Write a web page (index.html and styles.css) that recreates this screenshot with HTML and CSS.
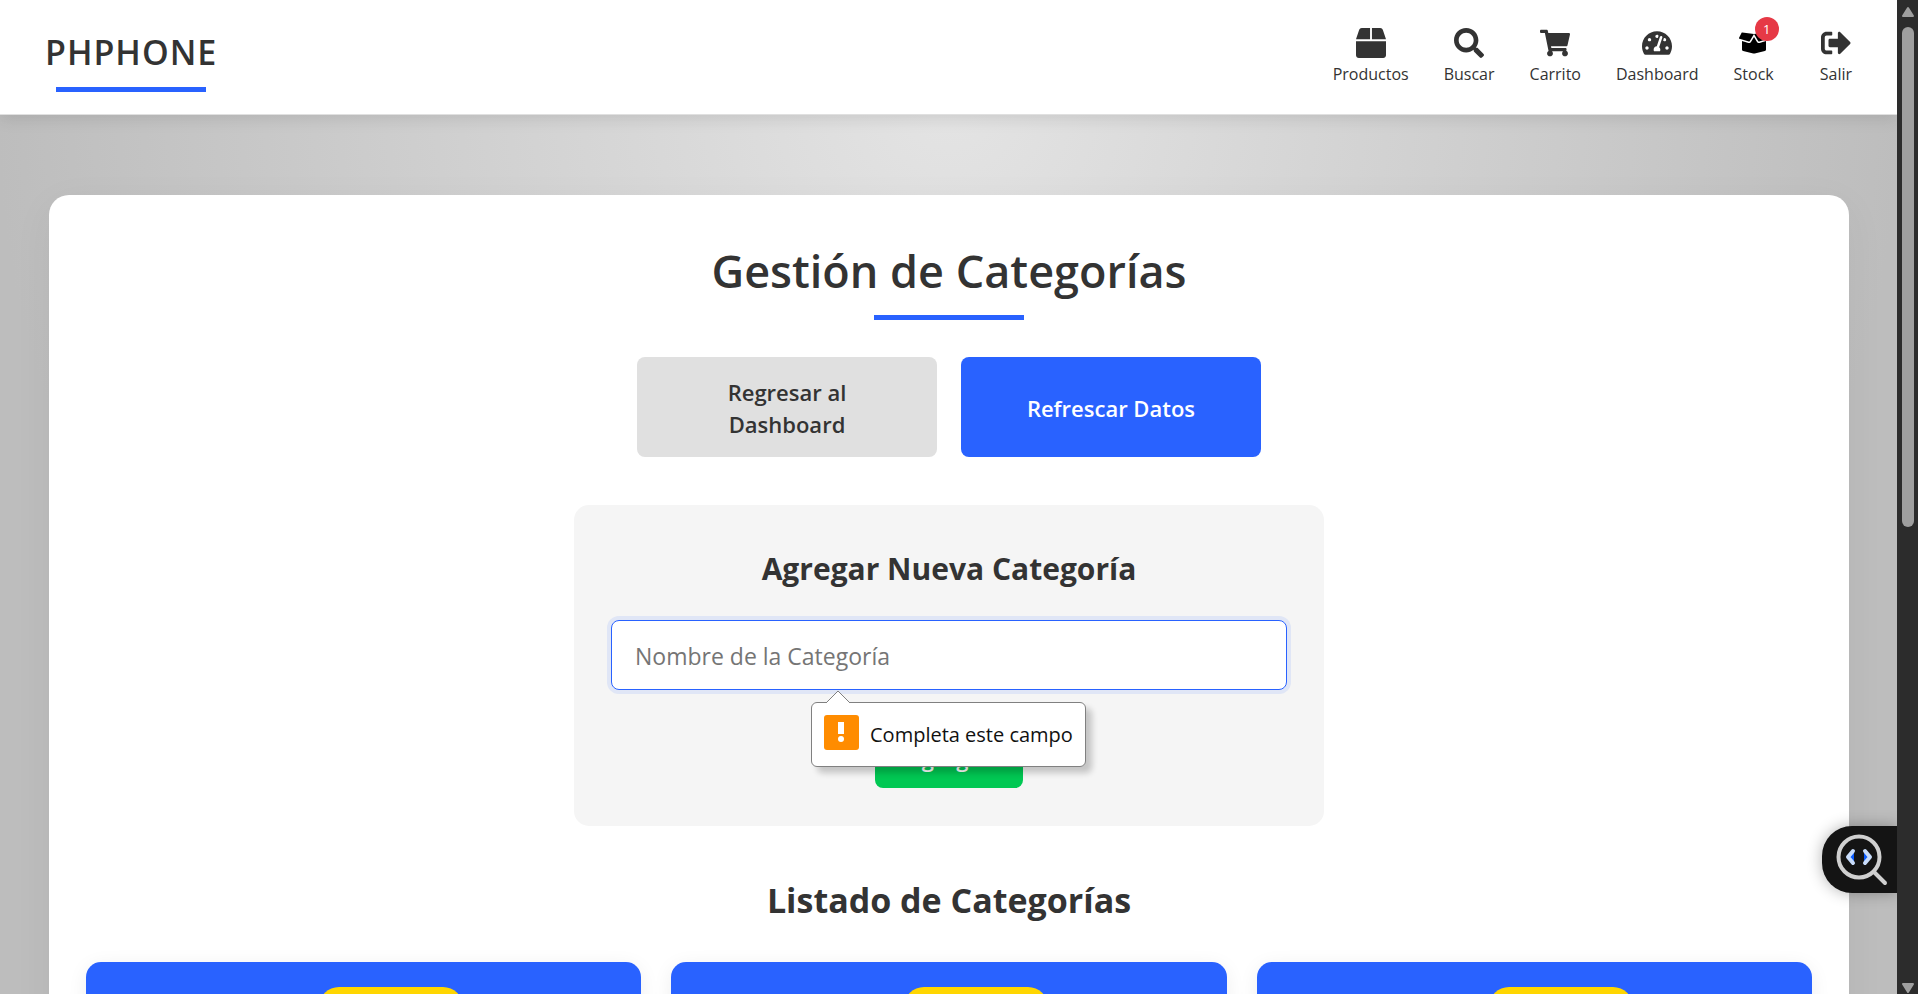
FILE: index.html
```html
<!DOCTYPE html>
<html lang="es">
<head>
<meta charset="utf-8">
<meta name="viewport" content="width=device-width, initial-scale=1">
<title>Gestión de Categorías</title>
<link rel="stylesheet" href="styles.css">
</head>
<body>
<div class="page">
  <header class="header">
    <a class="logo" href="#">PHPHONE</a>
    <nav class="nav">
      <a class="nav-item" href="#">
        <svg class="icon icon-square" viewBox="0 0 512 512"><path d="M509.500 184.600L458.900 32.800C452.400 13.200 434.100 0 413.400 0H272v192h238.700c-.4-2.500-.4-5-1.200-7.400zM240 0H98.600c-20.700 0-39 13.200-45.500 32.800L2.500 184.600c-.8 2.400-.8 4.900-1.200 7.400H240V0zM0 224v240c0 26.500 21.500 48 48 48h416c26.500 0 48-21.500 48-48V224H0z"/></svg>
        <span>Productos</span>
      </a>
      <a class="nav-item" href="#">
        <svg class="icon icon-square" viewBox="0 0 512 512"><path d="M505 442.700L405.300 343c-4.500-4.500-10.600-7-17-7H372c27.600-35.300 44-79.700 44-128C416 93.100 322.900 0 208 0S0 93.100 0 208s93.100 208 208 208c48.300 0 92.700-16.400 128-44v16.300c0 6.400 2.500 12.500 7 17l99.700 99.700c9.400 9.400 24.600 9.400 33.900 0l28.300-28.300c9.400-9.400 9.400-24.600.1-34zM208 336c-70.700 0-128-57.200-128-128 0-70.700 57.200-128 128-128 70.700 0 128 57.200 128 128 0 70.700-57.200 128-128 128z"/></svg>
        <span>Buscar</span>
      </a>
      <a class="nav-item" href="#">
        <svg class="icon" viewBox="0 0 576 512"><path d="M528.120 301.319l47.273-208C578.806 78.301 567.391 64 551.990 64H159.208l-9.166-44.810C147.758 8.021 137.930 0 126.529 0H24C10.745 0 0 10.745 0 24v16c0 13.255 10.745 24 24 24h69.883l70.248 343.435C147.325 417.100 136 435.222 136 456c0 30.928 25.072 56 56 56s56-25.072 56-56c0-15.674-6.447-29.835-16.824-40h209.647C430.447 426.165 424 440.326 424 456c0 30.928 25.072 56 56 56s56-25.072 56-56c0-22.172-12.888-41.332-31.579-50.405l5.517-24.276c3.413-15.018-8.002-29.319-23.403-29.319H218.117l-6.545-32h293.145c11.206 0 20.920-7.754 23.403-18.681z"/></svg>
        <span>Carrito</span>
      </a>
      <a class="nav-item" href="#">
        <svg class="icon" viewBox="0 0 576 512"><path d="M288 32C128.940 32 0 160.940 0 320c0 52.800 14.250 102.260 39.060 144.800 5.610 9.620 16.300 15.200 27.440 15.200h443c11.140 0 21.830-5.580 27.440-15.200C561.750 422.260 576 372.800 576 320c0-159.060-128.940-288-288-288zm0 64c14.710 0 26.580 10.130 30.320 23.650-1.110 2.260-2.640 4.230-3.450 6.670l-9.220 27.670c-5.130 3.490-10.970 6.010-17.640 6.010-17.670 0-32-14.330-32-32S270.330 96 288 96zM96 384c-17.670 0-32-14.330-32-32s14.330-32 32-32 32 14.330 32 32-14.330 32-32 32zm48-160c-17.670 0-32-14.330-32-32s14.330-32 32-32 32 14.330 32 32-14.330 32-32 32zm246.770-72.410l-61.330 184C343.130 347.330 352 364.540 352 384c0 11.720-3.380 22.550-8.880 32H232.880c-5.500-9.450-8.880-20.280-8.880-32 0-33.940 26.500-61.430 59.900-63.590l61.340-184.010c4.170-12.560 17.730-19.450 30.360-15.170 12.570 4.190 19.350 17.790 15.170 30.360zm14.660 57.200l15.520-46.550c3.470-1.290 7.130-2.230 11.050-2.230 17.670 0 32 14.330 32 32s-14.330 32-32 32c-11.380-.01-20.890-6.280-26.570-15.220zM480 384c-17.670 0-32-14.330-32-32s14.330-32 32-32 32 14.330 32 32-14.330 32-32 32z"/></svg>
        <span>Dashboard</span>
      </a>
      <a class="nav-item nav-item-stock" href="#">
        <svg class="icon icon-stock" viewBox="0 0 640 512"><path d="M425.700 256c-16.900 0-32.800-9-41.400-23.400L320 126l-64.200 106.600c-8.700 14.500-24.600 23.500-41.500 23.500-4.500 0-9-.6-13.300-1.900L64 215v178c0 14.700 10 27.500 24.200 31l216.200 54.100c10.200 2.500 20.900 2.500 31 0L551.800 424c14.200-3.600 24.200-16.400 24.200-31V215l-137 39.100c-4.300 1.300-8.800 1.900-13.300 1.900zm212.600-112.200L586.800 41c-3.100-6.200-9.800-9.800-16.700-8.900L320 64l91.700 152.100c3.800 6.300 11.400 9.300 18.500 7.300l197.900-56.500c9.900-2.900 14.700-13.900 10.200-23.100zM53.200 41L1.700 143.800c-4.600 9.200.3 20.200 10.100 23l197.900 56.500c7.100 2 14.700-1 18.500-7.300L320 64 69.800 32.100c-6.900-.8-13.500 2.700-16.600 8.900z"/></svg>
        <span>Stock</span>
        <span class="count">1</span>
      </a>
      <a class="nav-item" href="#">
        <svg class="icon" viewBox="0 0 512 512"><path d="M497 273L329 441c-15 15-41 4.500-41-17v-96H152c-13.300 0-24-10.700-24-24v-96c0-13.300 10.700-24 24-24h136V88c0-21.400 25.900-32 41-17l168 168c9.300 9.400 9.300 24.600 0 34zM192 436v-40c0-6.600-5.400-12-12-12H96c-17.700 0-32-14.300-32-32V160c0-17.700 14.300-32 32-32h84c6.600 0 12-5.400 12-12V76c0-6.600-5.400-12-12-12H96c-53 0-96 43-96 96v192c0 53 43 96 96 96h84c6.600 0 12-5.400 12-12z"/></svg>
        <span>Salir</span>
      </a>
    </nav>
  </header>

  <main class="panel">
    <h1 class="title">Gestión de Categorías</h1>
    <div class="actions">
      <a class="action action-back" href="#">Regresar al Dashboard</a>
      <button class="action action-refresh" type="button">Refrescar Datos</button>
    </div>
    <form class="form">
      <h2 class="form-title">Agregar Nueva Categoría</h2>
      <div class="field">
        <input class="input" type="text" name="nombre" placeholder="Nombre de la Categoría" aria-label="Nombre de la Categoría">
        <div class="tip" role="alert">
          <svg class="tip-arrow" viewBox="0 0 24 13"><path d="M0 13L12 1l12 12" fill="#fff" stroke="#808080"/></svg>
          <svg class="tip-icon" viewBox="0 0 35 35"><rect width="35" height="35" rx="3" fill="#ff8c00"/><path d="M14 7h6v12h-6z" fill="#fff"/><circle cx="17" cy="24" r="3" fill="#fff"/></svg>
          <span>Completa este campo</span>
        </div>
      </div>
      <button class="submit" type="button">Agregar</button>
    </form>
    <h2 class="list-title">Listado de Categorías</h2>
    <div class="cards">
      <article class="card"><div class="pill"></div></article>
      <article class="card"><div class="pill"></div></article>
      <article class="card"><div class="pill"></div></article>
    </div>
  </main>

  <button class="inspector" type="button" aria-label="Inspeccionar">
    <svg class="inspector-icon" viewBox="0 0 52 52" fill="none" stroke-linecap="round" stroke-linejoin="round"><circle cx="23" cy="23" r="20.500" stroke="#d0d0d0" stroke-width="4"/><path d="M38 38l11 11" stroke="#d0d0d0" stroke-width="4"/><path d="M18 17v12l-5-6zM28 17v12l5-6z" fill="#0a5cff"/><path d="M17 17l-5 6 5 6M29 17l5 6-5 6" stroke="#c8dcfa" stroke-width="4"/></svg>
  </button>
</div>
<div class="scrollbar" aria-hidden="true">
  <svg class="scroll-arrow" viewBox="0 0 14 12"><path d="M7 2l5 8H2z"/></svg>
  <div class="thumb"></div>
  <svg class="scroll-arrow" viewBox="0 0 14 12"><path d="M7 10l5-8H2z"/></svg>
</div>
</body>
</html>
```
FILE: styles.css
```css
* { box-sizing: border-box; }

body {
  margin: 0;
  height: 100vh;
  display: flex;
  overflow: hidden;
  color: #333;
  font-family: "Segoe UI", "Open Sans", "Noto Sans", sans-serif;
}

a { color: inherit; text-decoration: none; }
h1, h2 { margin: 0; }
button, input { font-family: inherit; }

.page {
  position: relative;
  flex: 1;
  overflow: hidden;
  background: radial-gradient(circle at 50% 10%, #e4e4e4 0%, #bdbdbd 73%);
}

.header {
  position: relative;
  display: flex;
  justify-content: space-between;
  align-items: flex-start;
  height: 115px;
  padding: 0 45px;
  background: #fff;
  border-bottom: 1px solid #e0e0e0;
  box-shadow: 0 4px 15px rgba(0, 0, 0, 0.1);
}

.logo {
  display: flex;
  flex-direction: column;
  align-items: center;
  gap: 11px;
  padding-top: 28px;
  font-size: 34px;
  line-height: 48px;
  font-weight: 600;
  letter-spacing: 1px;
}

.logo::after,
.title::after {
  content: "";
  width: 150px;
  height: 5px;
  background: #2962ff;
}

.nav { display: flex; gap: 35px; padding-top: 27px; }

.nav-item {
  position: relative;
  display: flex;
  flex-direction: column;
  align-items: center;
  gap: 3px;
  font-size: 16px;
  line-height: 24px;
}

.icon { width: 30px; height: 32px; fill: #333; }
.icon-stock { fill: #000; }
.nav-item-stock { margin-right: 11px; }

.count {
  position: absolute;
  top: -10px;
  right: -5px;
  width: 24px;
  height: 24px;
  border-radius: 50%;
  background: #e63946;
  color: #fff;
  font-size: 13px;
  line-height: 25px;
  text-align: center;
}

.panel {
  display: flex;
  flex-direction: column;
  align-items: center;
  margin: 80px 48px 0 49px;
  padding: 40px 37px 80px;
  border-radius: 20px;
  background: #fff;
  box-shadow: 0 10px 40px rgba(0, 0, 0, 0.05);
}

.title {
  display: flex;
  flex-direction: column;
  align-items: center;
  gap: 8px;
  font-size: 45px;
  line-height: 72px;
  font-weight: 600;
}

.actions { display: flex; gap: 24px; margin-top: 37px; }

.action {
  display: flex;
  align-items: center;
  justify-content: center;
  width: 300px;
  height: 100px;
  padding: 2px 60px 0;
  border: 0;
  border-radius: 8px;
  font-size: 22px;
  line-height: 32px;
  font-weight: 600;
  text-align: center;
}

.action-back { background: #e0e0e0; color: #333; }
.action-refresh { background: #2962ff; color: #fff; padding: 2px 24px 0; }

.form {
  display: flex;
  flex-direction: column;
  align-items: center;
  width: 100%;
  max-width: 750px;
  margin-top: 48px;
  padding: 38px 37px;
  border-radius: 15px;
  background: #f5f5f5;
}

.form-title { font-size: 30px; line-height: 52px; font-weight: 700; }

.field { position: relative; width: 100%; margin-top: 25px; }

.input {
  display: block;
  width: 100%;
  height: 70px;
  padding: 2px 23px 0;
  border: 1px solid #2962ff;
  border-radius: 8px;
  outline: 0;
  background: #fff;
  color: #333;
  font-size: 23px;
  box-shadow: 0 0 0 4px rgba(41, 98, 255, 0.1);
}

.input::placeholder { color: #757575; }

.tip {
  position: absolute;
  z-index: 2;
  top: 82px;
  left: 200px;
  display: flex;
  align-items: center;
  gap: 11px;
  height: 65px;
  padding: 0 12px;
  border: 1px solid #808080;
  border-radius: 6px;
  background: #fff;
  color: #111;
  font-size: 20px;
  line-height: 28px;
  white-space: nowrap;
  box-shadow: 6px 6px 6px rgba(0, 0, 0, 0.2);
}

.tip-icon { width: 35px; height: 35px; margin-bottom: 5px; }
.tip-arrow { position: absolute; top: -13px; left: 14px; width: 24px; height: 13px; }

.submit {
  height: 61px;
  margin-top: 37px;
  padding: 0 32px;
  border: 0;
  border-radius: 8px;
  background: #00c853;
  color: #fff;
  font-size: 22px;
  line-height: 32px;
  font-weight: 600;
}

.list-title { margin-top: 47px; font-size: 34px; line-height: 54px; font-weight: 700; }

.cards {
  display: grid;
  grid-template-columns: repeat(3, 1fr);
  gap: 30px;
  width: 100%;
  margin-top: 35px;
}

.card {
  display: flex;
  justify-content: center;
  height: 240px;
  padding: 25px 0 0 54px;
  border-radius: 15px;
  background: #2962ff;
  box-shadow: 0 4px 20px rgba(0, 0, 0, 0.07);
}

.pill { width: 144px; height: 40px; border-radius: 20px; background: #ffd600; }

.inspector {
  position: absolute;
  right: 0;
  bottom: 101px;
  display: flex;
  align-items: center;
  width: 75px;
  height: 67px;
  padding: 0 0 0 14px;
  border: 0;
  border-radius: 30px 0 0 30px;
  background: #141414;
  box-shadow: 0 0 15px rgba(0, 0, 0, 0.3);
}

.inspector-icon { width: 52px; height: 52px; }

.scrollbar {
  display: flex;
  flex-direction: column;
  align-items: center;
  width: 21px;
  padding: 6px 0 0;
  background: #2c2c2c;
}

.scroll-arrow { flex: none; width: 14px; height: 12px; fill: #9f9f9f; stroke: #9f9f9f; stroke-width: 2; stroke-linejoin: round; }
.scroll-arrow:last-child { margin-top: auto; }

.thumb { width: 12px; height: calc(51% - 4px); margin-top: 9px; border-radius: 6px; background: #9f9f9f; }
```
